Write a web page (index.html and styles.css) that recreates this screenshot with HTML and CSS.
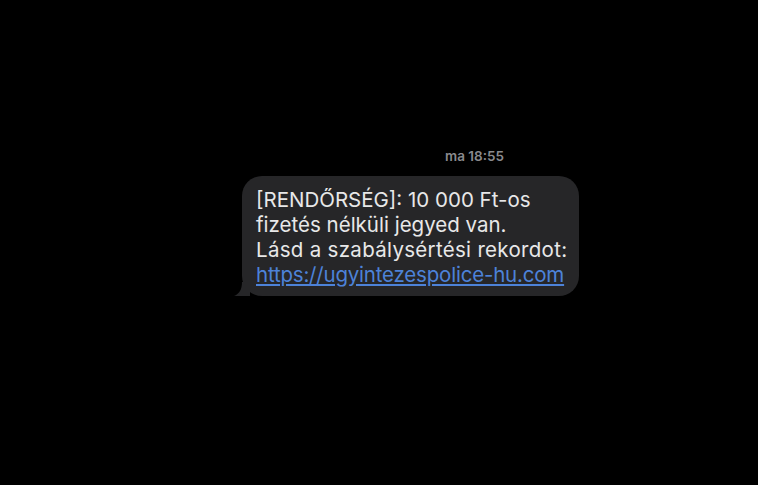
FILE: index.html
```html
<!DOCTYPE html>
<html lang="hu">
<head>
	<meta charset="UTF-8">
	<title>Üzenet</title>
	<link rel="stylesheet" href="styles.css">
</head>
<body>
	<div class="thread">
		<div class="stamp">ma 18:55</div>
		<div class="row">
			<div class="bubble">
				<p>[RENDŐRSÉG]: 10 000 Ft-os<br>fizetés nélküli jegyed van.<br><span class="wide">Lásd a szabálysértési rekordot:</span><br><a href="javascript:">https://ugyintezespolice-hu.com</a></p>
				<svg class="tail" width="16" height="14" viewBox="0 0 16 14">
					<path d="M16 0 L16 14 L0 14 C5 12 8 8 8 0 Z" fill="#262628"/>
				</svg>
			</div>
		</div>
	</div>
</body>
</html>
```

FILE: styles.css
```css
html, body {
	margin: 0;
	padding: 0;
	background: #000;
	height: 100%;
}
.thread {
	padding-top: 148px;
	font-family: Inter, "Liberation Sans", sans-serif;
}
.stamp {
	padding-left: 445px;
	font-size: 13.5px;
	font-weight: 600;
	color: #8a8a8e;
	line-height: 16px;
}
.row {
	display: flex;
	padding-left: 242px;
	margin-top: 12px;
}
.bubble {
	position: relative;
	width: 337px;
	background: #262628;
	border-radius: 20px;
	padding: 11px 0 9px 14px;
	box-sizing: border-box;
}
.bubble p {
	margin: 0;
	font-size: 20.5px;
	line-height: 25px;
	color: #e8e8e8;
	white-space: nowrap;
}
.bubble .wide {
	letter-spacing: 0.3px;
}
.bubble a {
	color: #4d82d8;
	letter-spacing: -0.2px;
	text-decoration: underline;
	text-underline-offset: 2px;
}
.tail {
	position: absolute;
	left: -8px;
	bottom: 0;
}
```
